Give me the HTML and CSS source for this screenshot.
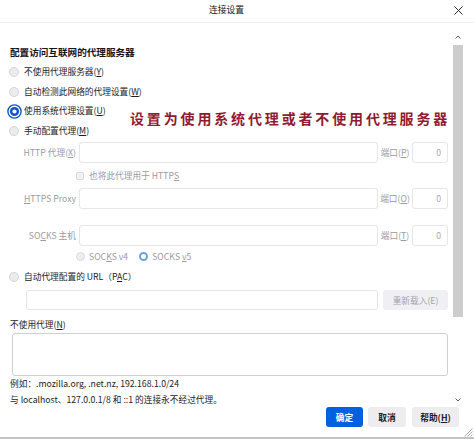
FILE: index.html
```html
<!DOCTYPE html>
<html lang="zh-CN">
<head>
<meta charset="utf-8">
<title>连接设置</title>
<link rel="stylesheet" href="styles.css">
</head>
<body>
<div class="window">
  <div class="titlebar">
    <div class="title">连接设置</div>
    <div class="close">
      <svg width="9" height="9" viewBox="0 0 9 9"><path d="M0.5 0.5 L8.5 8.5 M8.5 0.5 L0.5 8.5" stroke="#2b2a33" stroke-width="1" fill="none"/></svg>
    </div>
  </div>

  <div class="scrollarea">
    <div class="content">
      <div class="heading">配置访问互联网的代理服务器</div>
      <div class="radios">
        <div class="row"><span class="radio"></span><span>不使用代理服务器(<u>Y</u>)</span></div>
        <div class="row"><span class="radio"></span><span>自动检测此网络的代理设置(<u>W</u>)</span></div>
        <div class="row"><span class="radio checked">
          <svg width="15" height="15" viewBox="0 0 15 15"><circle cx="7.5" cy="7.5" r="6.6" fill="none" stroke="#0b55c4" stroke-width="1.4"/><circle cx="7.5" cy="7.5" r="4.6" fill="#0b55c4"/><circle cx="7.5" cy="7.5" r="2.1" fill="#ffffff"/></svg>
        </span><span>使用系统代理设置(<u>U</u>)</span></div>
        <div class="row"><span class="radio"></span><span>手动配置代理(<u>M</u>)</span></div>
      </div>

      <div class="manual">
        <div class="field">
          <span class="flabel">HTTP 代理(<u>X</u>)</span>
          <span class="input"></span>
          <span class="plabel">端口(<u>P</u>)</span>
          <span class="port">0</span>
        </div>
        <div class="checkrow"><span class="check"></span><span>也将此代理用于 HTTP<u>S</u></span></div>
        <div class="field">
          <span class="flabel"><u>H</u>TTPS Proxy</span>
          <span class="input"></span>
          <span class="plabel">端口(<u>O</u>)</span>
          <span class="port">0</span>
        </div>
        <div class="field socks">
          <span class="flabel">SO<u>C</u>KS 主机</span>
          <span class="input"></span>
          <span class="plabel">端口(<u>T</u>)</span>
          <span class="port">0</span>
        </div>
        <div class="socksrow">
          <span class="sradio"></span><span class="stext">SOC<u>K</u>S v4</span>
          <span class="sradio on"></span><span class="stext">SOCKS <u>v</u>5</span>
        </div>
      </div>

      <div class="row pacradio"><span class="radio"></span><span>自动代理配置的 URL（P<u>A</u>C）</span></div>
      <div class="pacrow">
        <span class="input"></span>
        <span class="reload">重新载入(E)</span>
      </div>

      <div class="nolabel">不使用代理(<u>N</u>)</div>
      <div class="textarea"></div>
      <div class="note">例如：.mozilla.org, .net.nz, 192.168.1.0/24</div>
      <div class="note">与 localhost、127.0.0.1/8 和 ::1 的连接永不经过代理。</div>
    </div>

    <div class="scrollbar">
      <div class="arrow">
        <svg width="6" height="4" viewBox="0 0 6 4"><path d="M0.5 3.5 L3 1 L5.5 3.5" stroke="#5b5b66" stroke-width="1" fill="none"/></svg>
      </div>
      <div class="thumb"></div>
      <div class="track"></div>
      <div class="arrow">
        <svg width="6" height="4" viewBox="0 0 6 4"><path d="M0.5 0.5 L3 3 L5.5 0.5" stroke="#5b5b66" stroke-width="1" fill="none"/></svg>
      </div>
    </div>
  </div>

  <div class="footer">
    <span class="btn primary">确定</span>
    <span class="btn">取消</span>
    <span class="btn help">帮助(<u>H</u>)</span>
    <svg class="grip" width="10" height="10" viewBox="0 0 10 10"><path d="M9.5 1.5 L1.5 9.5 M9.5 4.5 L4.5 9.5 M9.5 7.5 L7.5 9.5" stroke="#9a9aa0" stroke-width="0.8" fill="none"/></svg>
  </div>
  <div class="edge"></div>

  <div class="annotation">设置为使用系统代理或者不使用代理服务器</div>
</div>
</body>
</html>
```

FILE: styles.css
```css
* { box-sizing: border-box; }

html, body {
  margin: 0;
  padding: 0;
  background: #ffffff;
}

body {
  font-family: "Noto Sans CJK SC", "Noto Sans", sans-serif;
  font-size: 8.7px;
  color: #1c1b22;
}

u { text-decoration: underline; text-underline-offset: 1px; }

.window {
  position: relative;
  width: 474px;
  height: 439px;
  overflow: hidden;
  background: #ffffff;
}

/* title bar */
.titlebar {
  height: 23px;
  display: flex;
  align-items: center;
  border-bottom: 1px solid #eeeef0;
}
.title {
  flex: 1;
  text-align: center;
  font-size: 8.8px;
  line-height: 12px;
  padding-bottom: 2px;
  color: #15141a;
}
.close {
  width: 21px;
  height: 22px;
  display: flex;
  align-items: center;
  padding-left: 1px;
  padding-bottom: 2px;
}

/* scroll area */
.scrollarea {
  height: 383px;
  display: flex;
  overflow: hidden;
}
.content {
  flex: 1;
  padding: 22px 5px 0 10px;
  overflow: hidden;
}
.heading {
  height: 14px;
  line-height: 14px;
  font-size: 9.6px;
  font-weight: 700;
  color: #15141a;
}
.radios {
  margin-top: 3.5px;
}
.row {
  height: 19.5px;
  display: flex;
  align-items: center;
  line-height: 12px;
}
.radio {
  width: 10px;
  height: 10px;
  margin-left: -1px;
  margin-right: 5px;
  border-radius: 50%;
  background: #ececef;
  border: 1px solid #d4d4d9;
  flex: none;
  display: flex;
  align-items: center;
  justify-content: center;
}
.radio.checked {
  background: transparent;
  border: none;
  overflow: visible;
}
.radio.checked svg { flex: none; }

/* manual proxy section */
.manual {
  margin-top: 1.5px;
  color: #9b9ba3;
}
.field {
  height: 21px;
  display: flex;
  align-items: stretch;
}
.field.socks { margin-top: 16px; }
.flabel {
  width: 69px;
  padding-right: 3px;
  text-align: right;
  display: flex;
  align-items: center;
  justify-content: flex-end;
  white-space: nowrap;
}
.input {
  flex: 1;
  background: #ffffff;
  border: 1px solid #e5e5ea;
  border-radius: 3px;
}
.plabel {
  width: 34px;
  display: flex;
  align-items: center;
  justify-content: center;
  white-space: nowrap;
}
.port {
  width: 36px;
  border: 1px solid #e5e5ea;
  border-radius: 3px;
  display: flex;
  align-items: center;
  justify-content: flex-end;
  padding-right: 6px;
  color: #a9a9b0;
}
.checkrow {
  height: 25px;
  display: flex;
  align-items: center;
  padding-left: 66px;
}
.check {
  width: 8px;
  height: 8px;
  border: 1px solid #d8d8dc;
  background: #f2f2f4;
  border-radius: 2px;
  margin-right: 5px;
}
.socksrow {
  height: 21px;
  display: flex;
  align-items: center;
  padding-left: 66px;
}
.sradio {
  width: 9px;
  height: 9px;
  border-radius: 50%;
  background: #eeeef1;
  border: 1px solid #dadade;
  margin-right: 4px;
}
.sradio.on {
  background: #ffffff;
  border: 2.5px solid #6f9fe0;
}
.stext { margin-right: 11px; }

.pacradio { height: 20px; }

.pacrow {
  height: 20px;
  margin-top: 3px;
  display: flex;
  padding-left: 16px;
  gap: 5px;
}
.reload {
  width: 65px;
  background: #f0f0f4;
  border-radius: 3px;
  color: #a3a3ab;
  display: flex;
  align-items: center;
  justify-content: center;
}

.nolabel {
  height: 23px;
  line-height: 14px;
  padding-top: 8px;
}
.textarea {
  height: 43px;
  margin-left: 2px;
  border: 1px solid #cfcfd6;
  border-radius: 3px;
}
.note {
  height: 16px;
  line-height: 16px;
  white-space: nowrap;
}
.note:first-of-type { margin-top: 1px; }

/* scrollbar */
.scrollbar {
  width: 10px;
  margin-right: 11px;
  display: flex;
  flex-direction: column;
  padding-top: 8px;
}
.arrow {
  height: 12px;
  display: flex;
  align-items: center;
  justify-content: center;
}
.thumb {
  height: 272px;
  margin-top: 2px;
  background: #cdcdcd;
}
.track { flex: 1; }

/* footer */
.footer {
  position: relative;
  height: 31px;
  display: flex;
  justify-content: flex-end;
  align-items: flex-start;
  padding: 1px 15px 0 0;
  gap: 5px;
}
.btn {
  height: 20px;
  width: 38px;
  border-radius: 3px;
  background: #ededf0;
  font-weight: 700;
  font-size: 8.7px;
  display: flex;
  align-items: center;
  justify-content: center;
  color: #1c1b22;
}
.btn.primary {
  width: 37px;
  background: #0061e0;
  color: #ffffff;
}
.btn.help {
  width: 47px;
  margin-left: 1px;
}
.grip {
  position: absolute;
  right: 1px;
  bottom: 0;
}
.edge {
  height: 2px;
  background: #c3c3c6;
}

/* red annotation overlay */
.annotation {
  position: absolute;
  left: 130px;
  top: 109px;
  font-size: 14px;
  line-height: 18px;
  letter-spacing: 2.85px;
  font-weight: 700;
  color: #911a30;
  white-space: nowrap;
}
```
